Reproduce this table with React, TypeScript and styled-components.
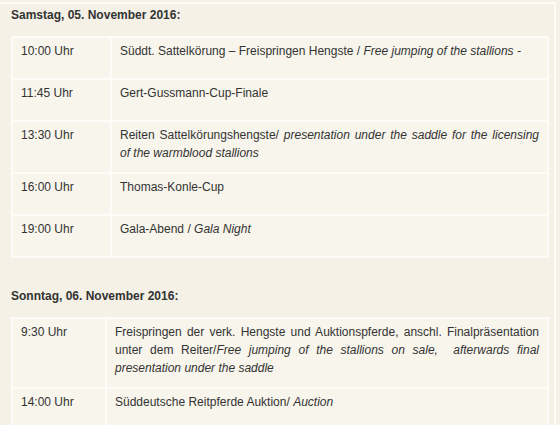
import React from "react";
import styled, { createGlobalStyle } from "styled-components";

const Global = createGlobalStyle`
  html, body {
    margin: 0;
    padding: 0;
    background: #f5f1e6;
  }
  body {
    font-family: "Liberation Sans", Arial, sans-serif;
    font-size: 12px;
    color: #333;
  }
`;

const Frame = styled.div`
  margin-top: 2px;
  width: 532px;
  padding: 2px 11px 0 11px;
  border-top: 2px solid #fdfcf8;
  border-right: 2px solid #fdfcf8;
  height: 425px;
  overflow: hidden;
`;

const Section = styled.section`
  margin-bottom: 29px;
`;

const Heading = styled.h3`
  margin: 0 0 12px 0;
  font-size: 12px;
  line-height: 18px;
  font-weight: bold;
  color: #333;
`;

const Table = styled.div<{ $timeWidth: number }>`
  display: grid;
  grid-template-columns: ${(p) => p.$timeWidth}px 1fr;
  gap: 2px;
  padding: 2px;
  width: 534px;
  background: #fdfcf8;
`;

const Cell = styled.div`
  background: #f8f5ec;
  min-height: 26px;
  padding: 4px 8px 10px 8px;
  line-height: 18px;
  font-size: 12px;
  color: #333;
`;

const TimeCell = styled(Cell)`
  white-space: nowrap;
`;

const DescCell = styled(Cell)`
  text-align: justify;
`;

type Item = { time: string; desc: React.ReactNode };

const saturday: Item[] = [
  {
    time: "10:00 Uhr",
    desc: (
      <>
        Süddt. Sattelkörung – Freispringen Hengste / <em>Free jumping of the stallions -</em>
      </>
    ),
  },
  { time: "11:45 Uhr", desc: "Gert-Gussmann-Cup-Finale" },
  {
    time: "13:30 Uhr",
    desc: (
      <>
        Reiten Sattelkörungshengste/{" "}
        <em>presentation under the saddle for the licensing of the warmblood stallions</em>
      </>
    ),
  },
  { time: "16:00 Uhr", desc: "Thomas-Konle-Cup" },
  {
    time: "19:00 Uhr",
    desc: (
      <>
        Gala-Abend / <em>Gala Night</em>
      </>
    ),
  },
];

const sunday: Item[] = [
  {
    time: "9:30 Uhr",
    desc: (
      <>
        Freispringen der verk. Hengste und Auktionspferde, anschl. Finalpräsentation unter dem
        Reiter/<em>Free jumping of the stallions on sale,&nbsp; afterwards final presentation under the saddle</em>
      </>
    ),
  },
  {
    time: "14:00 Uhr",
    desc: (
      <>
        Süddeutsche Reitpferde Auktion/ <em>Auction</em>
      </>
    ),
  },
];

function Schedule({ title, items, timeWidth }: { title: string; items: Item[]; timeWidth: number }) {
  return (
    <Section>
      <Heading>{title}</Heading>
      <Table $timeWidth={timeWidth}>
        {items.map((it) => (
          <React.Fragment key={it.time}>
            <TimeCell>{it.time}</TimeCell>
            <DescCell>{it.desc}</DescCell>
          </React.Fragment>
        ))}
      </Table>
    </Section>
  );
}

export default function App() {
  return (
    <>
      <Global />
      <Frame>
        <Schedule title="Samstag, 05. November 2016:" items={saturday} timeWidth={97} />
        <Schedule title="Sonntag, 06. November 2016:" items={sunday} timeWidth={92} />
      </Frame>
    </>
  );
}
